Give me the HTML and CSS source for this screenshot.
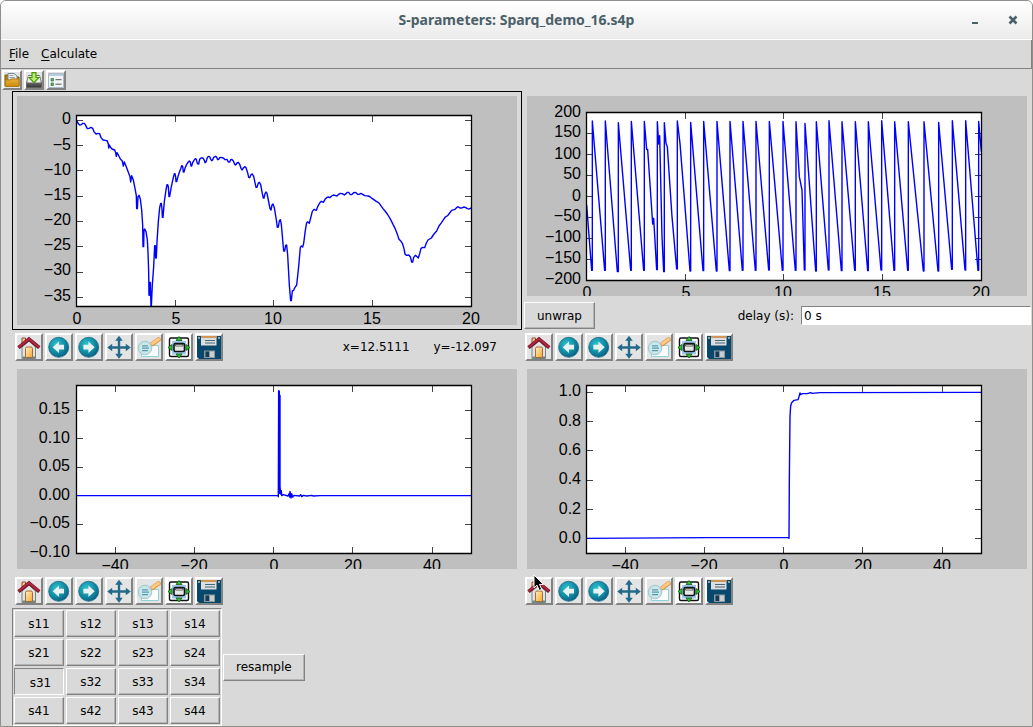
FILE: index.html
```html
<!DOCTYPE html>
<html lang="en">
<head>
<meta charset="utf-8">
<title>S-parameters: Sparq_demo_16.s4p</title>
<link rel="stylesheet" href="styles.css">
</head>
<body>
<svg class="sprites" aria-hidden="true">
  <defs>
    <radialGradient id="ball" cx=".4" cy=".35" r=".65"><stop offset="0" stop-color="#2fc3cf"/><stop offset=".6" stop-color="#128fa8"/><stop offset="1" stop-color="#0b6384"/></radialGradient>
    <linearGradient id="door" x2="1" y2="1"><stop offset="0" stop-color="#fff0c4"/><stop offset="1" stop-color="#f9a72b"/></linearGradient>
    <linearGradient id="folder" x2="0" y2="1"><stop offset="0" stop-color="#e9b23c"/><stop offset="1" stop-color="#c98a0c"/></linearGradient>
    <linearGradient id="drive" x2="0" y2="1"><stop offset="0" stop-color="#e4e4e4"/><stop offset=".5" stop-color="#777"/><stop offset="1" stop-color="#333"/></linearGradient>
  </defs>
  <symbol id="home" viewBox="0 0 24 24">
    <path d="M5 3h3.500v6H5z" fill="#f7cf8a" stroke="#9a4a3a"/>
    <path d="M5 12 12 6l6.500 6v11.500H5z" fill="#e3e3e1" stroke="#6f8589"/>
    <path d="M5.500 21.500h12.500v2H5.500z" fill="#70897a"/>
    <path d="M8.500 22.500v-9q0-1.500 1.500-1.500h4q1.500 0 1.500 1.500v9z" fill="url(#door)" stroke="#a56a3c"/>
    <path d="M1.500 12.600 12 4l10.300 8.600" fill="none" stroke="#6b1526" stroke-width="3.600"/>
    <path d="M1.900 12 12 3.800l9.900 8.200" fill="none" stroke="#b82440" stroke-width="2"/>
  </symbol>
  <symbol id="back" viewBox="0 0 24 24">
    <circle cx="11.700" cy="12.300" r="10" fill="url(#ball)" stroke="#1a6888" stroke-width=".8"/>
    <path d="M5.700 12.200 12 6.500v3.300h5v4.800h-5v3.300z" fill="#e9f2f2"/>
  </symbol>
  <symbol id="forward" viewBox="0 0 24 24">
    <circle cx="11.700" cy="12.300" r="10" fill="url(#ball)" stroke="#1a6888" stroke-width=".8"/>
    <path d="M17.700 12.200 11.400 6.500v3.300h-5v4.800h5v3.300z" fill="#e9f2f2"/>
  </symbol>
  <symbol id="pan" viewBox="0 0 24 24">
    <path d="M12 4v17M2 12.500h19" stroke="#25698a" stroke-width="2.400"/>
    <path d="M12 .8l3.800 5H8.200zM12 23.800l3.800-5H8.200zM.2 12.500l5-3.800v7.600zM23.800 12.500l-5-3.800v7.600z" fill="#25698a"/>
  </symbol>
  <symbol id="zoom" viewBox="0 0 24 24">
    <path d="M4.500 10.500h17v11h-17z" fill="#fafcfc" stroke="#8ed2da"/>
    <path d="M13 11.500 15 9.500" stroke="#999" stroke-width="2"/>
    <path d="M15.500 8.800 21.500 4.500" stroke="#dd9348" stroke-width="4.600" stroke-linecap="round"/>
    <path d="M15.500 8.500 21.500 4.200" stroke="#ffc883" stroke-width="3" stroke-linecap="round"/>
    <circle cx="8" cy="13" r="6.800" fill="#bfdfe2" fill-opacity=".9" stroke="#9fc9cf"/>
    <circle cx="8" cy="13" r="5.300" fill="#cde8ea"/>
    <path d="M5 10.800h6M5 13.200h7M5 15.600h6" stroke="#5799ad" stroke-width="1.200"/>
  </symbol>
  <symbol id="subplots" viewBox="0 0 24 24">
    <path d="M0 0h24v24H0z" fill="#fff"/>
    <rect x="2.500" y="3" width="19" height="18.500" rx="1.500" fill="#fff" stroke="#111" stroke-width="1.400"/>
    <path d="M5 6h14v13.500H5z" fill="#9cc7ea"/>
    <rect x="7" y="8.500" width="10.500" height="8" rx="1.500" fill="#e8e8e8" stroke="#111" stroke-width="1.600"/>
    <path d="M8.500 9.500H16V11H8.500z" fill="#fff" stroke="#222" stroke-width=".7"/>
    <path d="M12 1.500l3 4H9zM12 23l3-4H9zM1 12.500l4-3v6zM23 12.500l-4-3v6z" fill="#2ec32e" stroke="#125712" stroke-width=".8"/>
  </symbol>
  <symbol id="save" viewBox="0 0 24 24">
    <path d="M0 1h24v23H2l-2-2z" fill="#07486c"/>
    <path d="M1 2h2v2H1zM21 2h2v2h-2z" fill="#8ba3b1"/>
    <path d="M4 1h15.500v9.500H4z" fill="#dedede"/>
    <path d="M4 1h15.500v2H4z" fill="#d2955a"/>
    <path d="M8 5.500h10M8 8h10" stroke="#45697c" stroke-width="1.200"/>
    <path d="M7 15.500h11V23H7z" fill="#8c989e"/>
    <path d="M8.500 16.500H12V22H8.500z" fill="#123b55"/>
    <path d="M13 16.500h4V22h-4z" fill="#c9cdd0"/>
  </symbol>
  <symbol id="open" viewBox="0 0 16 16">
    <path d="M1 3h6l1 2h7v9H1z" fill="#b57c10" stroke="#8a5c08"/>
    <path d="M4 1.500h6l3 2.500v6H4z" fill="#edf1f3" stroke="#6f8595"/>
    <path d="M5.500 3.500h4M5.500 5.500h5.500M5.500 7.300h6" stroke="#8396a5" stroke-width=".9"/>
    <path d="M1.500 8h5l1-1h7.500v7.500H1.500z" fill="url(#folder)" stroke="#b07b12"/>
  </symbol>
  <symbol id="import" viewBox="0 0 16 16">
    <path d="M2.500 3.500h11l2 7.500v4.500H.5V11z" fill="url(#drive)" stroke="#555" stroke-width=".8"/>
    <path d="M2.500 4h11l1.300 6.500H1.200z" fill="#eee"/>
    <path d="M6 .7h4v4.800h3L8 10.700 3 5.500h3z" fill="#b5ec72" stroke="#4e9a06" stroke-width="1.200"/>
  </symbol>
  <symbol id="options" viewBox="0 0 16 16">
    <path d="M.5 1.500h15v14H.5z" fill="#f2f4f5" stroke="#aab9c5"/>
    <path d="M1 2h14v2H1z" fill="#b8cede"/>
    <path d="M3 6.500h2.500V9H3zM3 11h2.500v2.500H3z" fill="#59a869" stroke="#3b7b4b" stroke-width=".7"/>
    <path d="M7.500 7.700h6M7.500 12.200h6" stroke="#555"/>
  </symbol>
</svg>

<div class="window">
  <header class="titlebar">
    <h1 class="title">S-parameters: Sparq_demo_16.s4p</h1>
    <div class="window-controls">
      <button class="control" aria-label="Minimize"><svg viewBox="0 0 10 10"><path d="M2 8h6" stroke="#4b6069" stroke-width="2"/></svg></button>
      <button class="control" aria-label="Close"><svg viewBox="0 0 10 10"><path d="M1.500 1.500l7 7M8.500 1.500l-7 7" stroke="#4b6069" stroke-width="2.600"/></svg></button>
    </div>
  </header>
  <nav class="menubar">
    <button class="menu"><u>F</u>ile</button>
    <button class="menu"><u>C</u>alculate</button>
  </nav>
  <div class="quickbar">
    <button class="tool small" aria-label="Open"><svg><use href="#open"/></svg></button>
    <button class="tool small" aria-label="Save"><svg><use href="#import"/></svg></button>
    <button class="tool small" aria-label="Options"><svg><use href="#options"/></svg></button>
  </div>
  <main class="columns">
    <section class="column">
      <figure class="figure focused">
        <svg class="plot" viewBox="17 96 500 229" role="img" aria-label="Magnitude">
          <path class="area" d="M76.500 115.500h395v191h-395z"/>
          <path class="ticks" d="M175.500 116v6M273.500 116v6M372.500 116v6M175.500 306v-6M273.500 306v-6M372.500 306v-6M77 120.500h6M77 145.500h6M77 170.500h6M77 196.500h6M77 221.500h6M77 246.500h6M77 272.500h6M77 297.500h6M471 120.500h-6M471 145.500h-6M471 170.500h-6M471 196.500h-6M471 221.500h-6M471 246.500h-6M471 272.500h-6M471 297.500h-6"/>
          <g transform="translate(10 85) scale(.33333)"><polyline class="curve" points="200,107 204,115 209,120 214,119 218,115 223,115 227,121 232,131 237,130 243,127 248,130 252,140 258,147 264,145 269,146 273,158 279,165 286,166 292,168 295,177 296,189 298,180 301,186 306,192 314,195 317,203 319,214 321,203 325,210 331,222 337,228 340,243 343,231 348,243 355,262 360,275 362,291 365,272 370,285 375,310 379,332 380,371 382,371 384,335 387,331 391,342 395,375 398,420 399,485 401,485 402,435 404,432 408,440 412,465 414,500 416,560 417,631 418,631 419,592 421,592 423,664 424,664 427,600 431,545 434,482 436,482 437,519 439,519 441,470 445,410 449,368 452,355 454,355 456,372 457,397 459,397 463,350 468,315 471,299 473,299 475,305 477,335 479,334 484,305 490,278 493,266 495,266 497,276 498,290 500,290 503,278 508,262 512,252 515,242 518,244 520,261 522,261 525,250 530,238 535,231 538,228 541,231 543,243 545,243 548,233 552,226 556,221 559,223 562,236 566,237 569,223 573,219 579,219 583,226 585,233 588,231 592,218 595,214 599,215 603,224 605,227 608,225 611,217 617,214 620,217 623,224 626,223 629,218 632,217 640,219 645,224 651,223 655,231 659,231 662,224 665,223 670,228 674,238 677,240 681,234 685,232 689,238 693,250 696,255 700,249 704,245 708,248 713,263 716,277 719,278 723,269 727,267 731,274 735,293 738,307 741,307 745,294 748,292 752,299 757,326 760,339 762,339 765,326 768,321 771,325 775,345 780,371 783,375 786,360 789,357 793,368 799,405 802,427 805,426 808,408 811,404 814,418 818,465 821,498 824,498 827,481 830,480 833,510 838,600 842,647 844,647 847,618 851,616 855,607 860,600 866,545 871,487 874,483 878,486 881,475 886,436 890,413 893,410 898,415 902,399 907,379 912,373 916,375 919,376 923,365 929,354 934,349 940,352 945,343 950,338 955,336 960,338 965,333 970,330 975,331 981,333 986,328 991,325 997,326 1003,330 1008,326 1012,322 1016,322 1021,329 1025,329 1030,324 1034,322 1038,323 1043,328 1047,328 1053,325 1058,328 1064,332 1075,333 1081,336 1087,341 1100,350 1106,353 1112,361 1119,371 1125,378 1132,387 1140,400 1148,416 1155,430 1162,448 1167,463 1173,469 1177,475 1182,491 1185,507 1189,511 1196,510 1201,515 1205,531 1208,531 1211,517 1216,511 1220,514 1225,519 1229,506 1233,490 1238,487 1244,488 1249,474 1254,465 1264,459 1272,447 1280,438 1287,423 1295,412 1301,403 1306,396 1313,392 1319,384 1325,376 1335,373 1342,366 1346,366 1350,369 1356,369 1361,366 1366,367 1372,371 1378,372 1384,369"/></g>
          <path class="axes" d="M76.500 115.500h395v191h-395z"/>
          <g class="labels-y"><text x="71" y="124">0</text><text x="71" y="150">−5</text><text x="71" y="175">−10</text><text x="71" y="200">−15</text><text x="71" y="225">−20</text><text x="71" y="250">−25</text><text x="71" y="275">−30</text><text x="71" y="301">−35</text></g>
          <g class="labels-x"><text x="77" y="324">0</text><text x="176" y="324">5</text><text x="273" y="324">10</text><text x="372" y="324">15</text><text x="471" y="324">20</text></g>
        </svg>
      </figure>
      <div class="toolbar">
        <button class="tool" aria-label="Home"><svg><use href="#home"/></svg></button>
        <button class="tool" aria-label="Back"><svg><use href="#back"/></svg></button>
        <button class="tool" aria-label="Forward"><svg><use href="#forward"/></svg></button>
        <button class="tool" aria-label="Pan"><svg><use href="#pan"/></svg></button>
        <button class="tool" aria-label="Zoom"><svg><use href="#zoom"/></svg></button>
        <button class="tool white" aria-label="Subplots"><svg><use href="#subplots"/></svg></button>
        <button class="tool" aria-label="Save figure"><svg><use href="#save"/></svg></button>
        <output class="position"><span>x=12.5111</span><span>y=-12.097</span></output>
      </div>
      <figure class="figure">
        <svg class="plot" viewBox="17 369 500 200" role="img" aria-label="Impulse response">
          <path class="area" d="M76.500 385.500h395v168h-395z"/>
          <path class="ticks" d="M115.500 386v6M194.500 386v6M273.500 386v6M352.500 386v6M432.500 386v6M115.500 553v-6M194.500 553v-6M273.500 553v-6M352.500 553v-6M432.500 553v-6M77 410.500h6M77 438.500h6M77 467.500h6M77 495.500h6M77 524.500h6M471 410.500h-6M471 438.500h-6M471 467.500h-6M471 495.500h-6M471 524.500h-6"/>
          <g transform="translate(260 370) scale(.33333)"><polyline class="curve" points="-550,377 54,377 55,380 56,62 57,62 58,330 60,76 60,350 62,372 64,362 65,377 70,374 84,378 87,371 89,381 90,364 93,384 95,371 98,381 102,376 118,378 122,374 125,380 130,376 140,378 155,376 160,378 180,377 634,377"/></g>
          <path class="pulse" d="M279 391v103"/>
          <path class="axes" d="M76.500 385.500h395v168h-395z"/>
          <g class="labels-y"><text x="70" y="414">0.15</text><text x="70" y="443">0.10</text><text x="70" y="471">0.05</text><text x="70" y="500">0.00</text><text x="70" y="528">−0.05</text><text x="70" y="557">−0.10</text></g>
          <g class="labels-x"><text x="115" y="571">−40</text><text x="194" y="571">−20</text><text x="274" y="571">0</text><text x="353" y="571">20</text><text x="432" y="571">40</text></g>
        </svg>
      </figure>
      <div class="toolbar">
        <button class="tool" aria-label="Home"><svg><use href="#home"/></svg></button>
        <button class="tool" aria-label="Back"><svg><use href="#back"/></svg></button>
        <button class="tool" aria-label="Forward"><svg><use href="#forward"/></svg></button>
        <button class="tool" aria-label="Pan"><svg><use href="#pan"/></svg></button>
        <button class="tool" aria-label="Zoom"><svg><use href="#zoom"/></svg></button>
        <button class="tool white" aria-label="Subplots"><svg><use href="#subplots"/></svg></button>
        <button class="tool" aria-label="Save figure"><svg><use href="#save"/></svg></button>
      </div>
      <div class="selection">
        <div class="matrix">
          <button class="button">s11</button><button class="button">s12</button><button class="button">s13</button><button class="button">s14</button>
          <button class="button">s21</button><button class="button">s22</button><button class="button">s23</button><button class="button">s24</button>
          <button class="button pressed" aria-pressed="true">s31</button><button class="button">s32</button><button class="button">s33</button><button class="button">s34</button>
          <button class="button">s41</button><button class="button">s42</button><button class="button">s43</button><button class="button">s44</button>
        </div>
        <button class="button wide">resample</button>
      </div>
    </section>
    <section class="column">
      <figure class="figure">
        <svg class="plot" viewBox="527 96 500 200" role="img" aria-label="Phase">
          <path class="area" d="M586.500 112.500h395v168h-395z"/>
          <path class="ticks" d="M685.500 113v6M783.500 113v6M882.500 113v6M685.500 280v-6M783.500 280v-6M882.500 280v-6M587 133.500h6M587 154.500h6M587 175.500h6M587 196.500h6M587 217.500h6M587 238.500h6M587 259.500h6M981 133.500h-6M981 154.500h-6M981 175.500h-6M981 196.500h-6M981 217.500h-6M981 238.500h-6M981 259.500h-6"/>
          <g transform="translate(520 90) scale(.33333)"><polyline class="curve" points="200,345 208,450 215,541 217,541 217,93 254,541 256,541 256,93 292,545 295,545 295,98 332,541 334,541 334,94 371,541 373,541 373,94 380,178 383,178 398,402 401,385 410,539 412,539 412,95 416,162 419,137 426,440 431,545 433,545 433,98 438,160 442,170 456,380 470,537 472,537 472,93 480,160 495,350 510,543 512,543 512,97 549,542 551,542 551,94 589,543 591,543 591,94 628,542 630,542 630,94 667,541 669,541 669,94 706,541 708,541 708,94 746,540 748,540 748,94 787,541 789,541 789,94 805,290 826,541 828,541 828,95 838,260 846,300 853,540 855,540 855,100 887,543 889,543 889,95 925,540 927,540 927,92 964,542 966,542 966,95 1004,541 1006,541 1006,95 1043,542 1045,542 1045,95 1083,540 1085,540 1085,92 1122,541 1124,541 1124,95 1163,541 1165,541 1165,95 1210,543 1212,543 1212,95 1254,543 1256,543 1256,97 1295,538 1297,538 1297,92 1335,540 1337,540 1337,92 1374,541 1376,541 1376,94 1384,185"/></g>
          <path class="axes" d="M586.500 112.500h395v168h-395z"/>
          <g class="labels-y"><text x="581" y="117">200</text><text x="581" y="137">150</text><text x="581" y="159">100</text><text x="581" y="179">50</text><text x="581" y="201">0</text><text x="581" y="221">−50</text><text x="581" y="242">−100</text><text x="581" y="263">−150</text><text x="581" y="284">−200</text></g>
          <g class="labels-x"><text x="587" y="298">0</text><text x="686" y="298">5</text><text x="783" y="298">10</text><text x="882" y="298">15</text><text x="981" y="298">20</text></g>
        </svg>
      </figure>
      <div class="phase-options">
        <button class="button wide">unwrap</button>
        <label class="delay-label" for="delay">delay (s):</label>
        <input class="delay" id="delay" type="text" value="0 s">
      </div>
      <div class="toolbar">
        <button class="tool" aria-label="Home"><svg><use href="#home"/></svg></button>
        <button class="tool" aria-label="Back"><svg><use href="#back"/></svg></button>
        <button class="tool" aria-label="Forward"><svg><use href="#forward"/></svg></button>
        <button class="tool" aria-label="Pan"><svg><use href="#pan"/></svg></button>
        <button class="tool" aria-label="Zoom"><svg><use href="#zoom"/></svg></button>
        <button class="tool white" aria-label="Subplots"><svg><use href="#subplots"/></svg></button>
        <button class="tool" aria-label="Save figure"><svg><use href="#save"/></svg></button>
      </div>
      <figure class="figure">
        <svg class="plot" viewBox="527 369 500 200" role="img" aria-label="Step response">
          <path class="area" d="M586.500 385.500h395v168h-395z"/>
          <path class="ticks" d="M625.500 386v6M704.500 386v6M783.500 386v6M862.500 386v6M942.500 386v6M625.500 553v-6M704.500 553v-6M783.500 553v-6M862.500 553v-6M942.500 553v-6M587 392.500h6M587 421.500h6M587 450.500h6M587 480.500h6M587 509.500h6M587 538.500h6M981 392.500h-6M981 421.500h-6M981 450.500h-6M981 480.500h-6M981 509.500h-6M981 538.500h-6"/>
          <g transform="translate(520 370) scale(.33333)"><polyline class="curve" points="200,505 560,503 805,503 807,505 808,330 810,140 812,108 815,98 822,91 834,89 837,80 840,69 842,74 847,71 862,71 872,68 876,70 900,68 1384,67"/></g>
          <path class="axes" d="M586.500 385.500h395v168h-395z"/>
          <g class="labels-y"><text x="581" y="396">1.0</text><text x="581" y="426">0.8</text><text x="581" y="455">0.6</text><text x="581" y="484">0.4</text><text x="581" y="514">0.2</text><text x="581" y="543">0.0</text></g>
          <g class="labels-x"><text x="625" y="571">−40</text><text x="704" y="571">−20</text><text x="784" y="571">0</text><text x="863" y="571">20</text><text x="942" y="571">40</text></g>
        </svg>
      </figure>
      <div class="toolbar">
        <button class="tool" aria-label="Home"><svg><use href="#home"/></svg></button>
        <button class="tool" aria-label="Back"><svg><use href="#back"/></svg></button>
        <button class="tool" aria-label="Forward"><svg><use href="#forward"/></svg></button>
        <button class="tool" aria-label="Pan"><svg><use href="#pan"/></svg></button>
        <button class="tool" aria-label="Zoom"><svg><use href="#zoom"/></svg></button>
        <button class="tool white" aria-label="Subplots"><svg><use href="#subplots"/></svg></button>
        <button class="tool" aria-label="Save figure"><svg><use href="#save"/></svg></button>
        <svg class="pointer" viewBox="0 0 12 18" aria-hidden="true"><path d="M1 1v13l3-2.800 2.200 5.200 2.500-1L6.500 10.400H10.500z" fill="#000" stroke="#fff"/></svg>
      </div>
    </section>
  </main>
</div>
</body>
</html>
```
FILE: styles.css
```css
* {
  box-sizing: border-box;
}

body {
  margin: 0;
  background: #fff;
  color: #000;
  font: 12px/16px "DejaVu Sans", sans-serif;
}

button,
input {
  margin: 0;
  padding: 0;
  color: inherit;
  font: inherit;
}

.sprites {
  position: absolute;
  width: 0;
  height: 0;
}

.window {
  display: flex;
  flex-direction: column;
  min-height: 100vh;
  overflow: hidden;
  border: 1px solid #8f8e8b;
  border-radius: 6px 6px 0 0;
  background: #d9d9d9;
}

.titlebar {
  display: grid;
  grid-template-columns: 1fr auto 1fr;
  align-items: center;
  height: 39px;
  border-bottom: 1px solid #fff;
  background: linear-gradient(#fff, #ebebeb);
}

.title {
  grid-column: 2;
  margin: 0;
  color: #4b6069;
  font: bold 14px/18px "Noto Sans", "Open Sans", sans-serif;
}

.window-controls {
  display: flex;
  justify-content: flex-end;
  gap: 28px;
  padding-right: 14px;
}

.control {
  width: 10px;
  height: 10px;
  border: 0;
  background: none;
}

.control svg {
  display: block;
}

.menubar {
  display: flex;
  gap: 12px;
  height: 29px;
  padding: 0 8px;
  border-right: 1px solid #828282;
  border-bottom: 1px solid #828282;
}

.menu {
  border: 0;
  background: none;
}

.menu u {
  text-underline-offset: 2px;
}

.quickbar {
  display: flex;
  gap: 2px;
  padding: 1px;
}

.tool {
  width: 28px;
  height: 28px;
  border: 2px solid;
  border-color: #fff #828282 #828282 #fff;
  background: #e4e4e4;
}

.tool.white {
  background: #fff;
}

.tool svg {
  display: block;
  width: 24px;
  height: 24px;
}

.tool.small {
  width: 20px;
  height: 20px;
}

.tool.small svg {
  width: 16px;
  height: 16px;
}

.columns {
  display: grid;
  grid-template-columns: 1fr 1fr;
  padding-left: 11px;
}

.column {
  min-width: 0;
}

.figure {
  margin: 0;
  padding: 4px;
  border: 1px solid transparent;
}

.figure.focused {
  border-color: #000;
}

.plot {
  display: block;
  width: 100%;
  height: auto;
  background: #bfbfbf;
  font: 16px "Liberation Sans", Arial, sans-serif;
}

.area {
  fill: #fff;
}

.axes {
  fill: none;
  stroke: #000;
  stroke-width: 1.3;
}

.ticks {
  stroke: #444;
}

.curve {
  fill: none;
  stroke: #00f;
  stroke-width: 1.4;
  stroke-linejoin: round;
  vector-effect: non-scaling-stroke;
}

.pulse {
  stroke: #00f;
  stroke-width: 2;
}

.labels-y {
  text-anchor: end;
}

.labels-x {
  text-anchor: middle;
}

.toolbar {
  position: relative;
  display: flex;
  gap: 2px;
  padding: 3px;
}

.position {
  display: flex;
  gap: 24px;
  align-items: center;
  margin-left: auto;
  padding-right: 22px;
}

.pointer {
  position: absolute;
  top: 0;
  left: 11px;
  width: 12px;
  height: 18px;
}

.selection {
  display: flex;
  align-items: center;
  gap: 1px;
}

.matrix {
  display: grid;
  grid-template-columns: repeat(4, 50px);
  gap: 2px;
  padding: 1px;
  border: 1px solid;
  border-color: #828282 #fff #fff #828282;
}

.button {
  height: 27px;
  border: 1px solid;
  border-color: #fff #828282 #828282 #fff;
  background: #d9d9d9;
  box-shadow: inset -1px -1px #b4b4b4;
}

.button.pressed {
  padding: 3px 0 0 3px;
  border-color: #828282 #fff #fff #828282;
  box-shadow: none;
}

.button.wide {
  padding: 0 12px;
}

.phase-options {
  display: flex;
  align-items: center;
  padding: 1px 1px 1px 2px;
}

.delay-label {
  margin-left: auto;
  padding-right: 7px;
}

.delay {
  width: 230px;
  height: 19px;
  padding: 0 2px;
  border: 1px solid;
  border-color: #828282 #fff #fff #828282;
  background: #fff;
}
```
